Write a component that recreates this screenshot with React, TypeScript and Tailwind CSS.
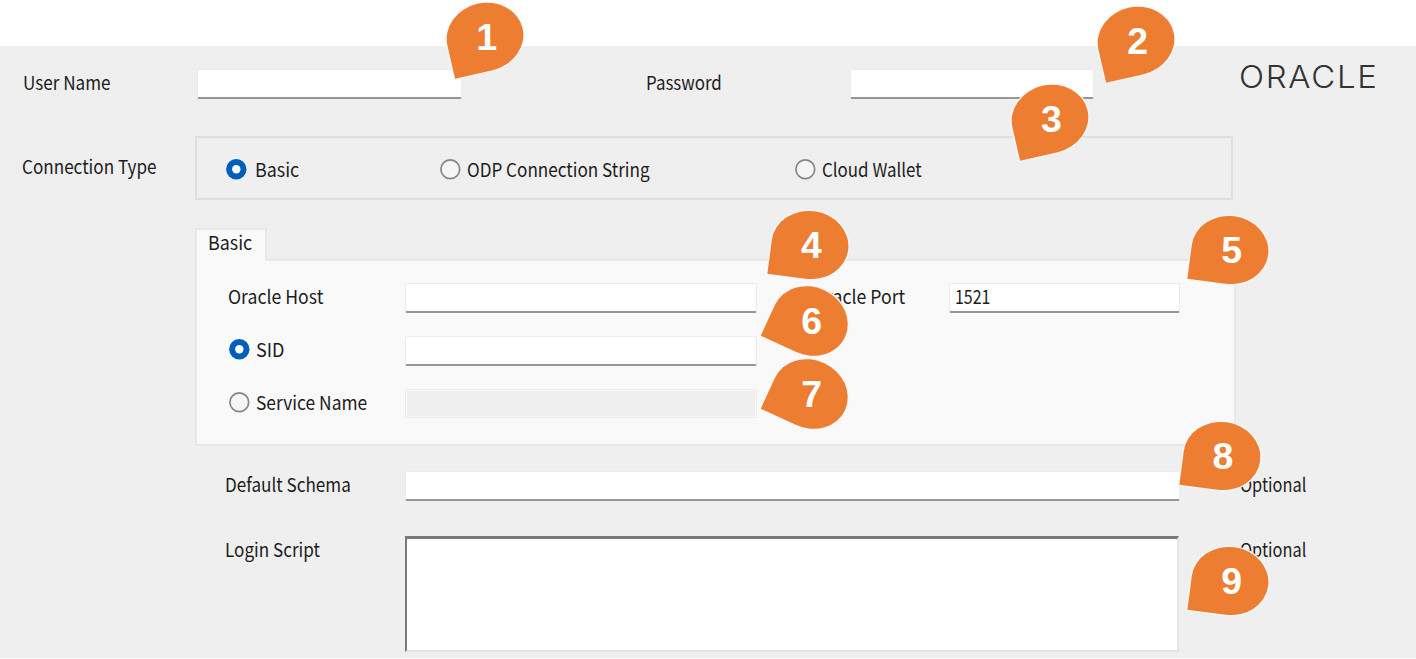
import type { ReactNode } from "react";

function Text({
  className = "",
  squeeze = "scale-x-[0.9]",
  children,
}: {
  className?: string;
  squeeze?: string;
  children: ReactNode;
}) {
  return (
    <span
      className={`block h-5 shrink-0 font-['Noto_Sans_CJK_JP','Noto_Sans',sans-serif] text-[19px] leading-5 whitespace-nowrap text-[#1c1c1c] ${className}`}
    >
      <span className={`inline-block origin-left ${squeeze}`}>{children}</span>
    </span>
  );
}

function Field({ className = "", children }: { className?: string; children?: ReactNode }) {
  return (
    <div
      className={`h-[30px] shrink-0 rounded-[2px] border border-b-2 border-[#ebebeb] border-b-[#969696] bg-white ${className}`}
    >
      {children}
    </div>
  );
}

function Radio({ checked = false, className = "" }: { checked?: boolean; className?: string }) {
  return (
    <svg className={`size-[22px] shrink-0 ${className}`} viewBox="0 0 22 22">
      {checked ? (
        <>
          <circle cx="11.3" cy="11.3" r="10.2" fill="#005fb8" />
          <circle cx="11.3" cy="11.3" r="4.2" fill="#fff" />
        </>
      ) : (
        <circle cx="11.3" cy="11.3" r="9.4" fill="#f5f5f5" stroke="#868686" strokeWidth="1.7" />
      )}
    </svg>
  );
}

const markers = [
  { n: 1, x: 485.3, y: 37.4, tilt: -13 },
  { n: 2, x: 1136.3, y: 41.2, tilt: -13 },
  { n: 3, x: 1050, y: 119, tilt: -13 },
  { n: 4, x: 810, y: 245, tilt: 7.5 },
  { n: 5, x: 1230.3, y: 249.5, tilt: 7.5 },
  { n: 6, x: 810.3, y: 320.5, tilt: 24.8 },
  { n: 7, x: 810.3, y: 393.5, tilt: 24.8 },
  { n: 8, x: 1221.5, y: 455.7, tilt: 7.5 },
  { n: 9, x: 1230.3, y: 580.7, tilt: 7.5 },
];

function Marker({ n, x, y, tilt }: { n: number; x: number; y: number; tilt: number }) {
  return (
    <div className="absolute size-[110px]" style={{ left: x - 55, top: y - 55 }}>
      <svg className="size-full" viewBox="-55 -55 110 110">
        <path
          d="M-38.5 0A38.5 34 0 0 1 38.5 0A38.5 34 0 0 1 0 34L-38.5 34Z"
          transform={`rotate(${tilt})`}
          fill="#ed7d31"
          stroke="#f6f6f6"
          strokeWidth="2.5"
          paintOrder="stroke"
        />
      </svg>
      <span className="absolute inset-0 pl-[3px] text-center font-['Liberation_Sans',sans-serif] text-[37.5px] leading-[110px] font-bold text-white">
        {n}
      </span>
    </div>
  );
}

export default function App() {
  return (
    <div className="relative flex h-[659px] w-[1416px] flex-col overflow-hidden bg-white">
      <div className="h-[46px] shrink-0" />
      <main className="flex h-[612px] flex-col bg-[#efefef]">
        <div className="flex h-[90px] items-start pt-[23px]">
          <Text className="mt-[3px] ml-[23px] w-[174px]">User Name</Text>
          <Field className="w-[265px]" />
          <Text className="mt-[3px] ml-[184px] w-[204px]" squeeze="scale-x-[0.89]">Password</Text>
          <Field className="w-[244px]" />
          <span className="-mt-[7px] ml-[145px] origin-left scale-x-[1.08] font-['Inter',sans-serif] text-[30.5px] leading-[30px] font-light tracking-[1.6px] text-[#333]">
            ORACLE
          </span>
        </div>

        <div className="flex h-[92px] items-start">
          <Text className="mt-5 ml-[22px] w-[173px]">Connection Type</Text>
          <div className="flex h-[64px] w-[1038px] items-start border-2 border-[#dfdfdf] pt-5">
            <Radio checked className="ml-7" />
            <Text className="mt-px ml-2 w-[184px]" squeeze="scale-x-[0.94]">Basic</Text>
            <Radio />
            <Text className="mt-px ml-[6px] w-[327px]">ODP Connection String</Text>
            <Radio />
            <Text className="mt-px ml-[6px]" squeeze="scale-x-[0.89]">Cloud Wallet</Text>
          </div>
        </div>

        <section className="ml-[195px] flex h-[218px] w-[1041px] flex-col">
          <div className="z-10 -mb-[2px] h-[33px] w-[72px] border-2 border-b-0 border-[#e8e8e8] bg-[#f9f9f9] pt-[2px] pl-[11px]">
            <Text squeeze="scale-x-[0.94]">Basic</Text>
          </div>
          <div className="flex h-[187px] flex-col border-2 border-[#e8e8e8] bg-[#f9f9f9] pt-[22px] pl-[31px]">
            <div className="flex h-[53px] items-start">
              <Text className="mt-[3px] w-[177px]" squeeze="scale-x-[0.93]">Oracle Host</Text>
              <Field className="w-[352px]" />
              <Text className="mt-[3px] ml-[56px] w-[136px]" squeeze="scale-x-[0.93]">Oracle Port</Text>
              <Field className="w-[231px] pt-[2px] pl-[5px]">
                <Text squeeze="scale-x-[0.84]">1521</Text>
              </Field>
            </div>
            <div className="flex h-[53px] items-start">
              <Radio checked className="mt-[2px]" />
              <Text className="mt-[3px] ml-[6px] w-[149px]" squeeze="scale-x-[0.95]">SID</Text>
              <Field className="w-[352px]" />
            </div>
            <div className="flex items-start">
              <Radio className="mt-[2px]" />
              <Text className="mt-[3px] ml-[6px] w-[149px]" squeeze="scale-x-[0.915]">Service Name</Text>
              <div className="h-[29px] w-[352px] rounded-[2px] border border-[#ebebeb] bg-[#f9f9f9] p-px">
                <div className="h-full bg-[#efefef]" />
              </div>
            </div>
          </div>
        </section>

        <div className="flex h-[65px] items-start pt-[25px]">
          <Text className="mt-[3px] ml-[225px] w-[180px]">Default Schema</Text>
          <Field className="w-[775px]" />
          <Text className="mt-[3px] ml-[60px]" squeeze="scale-x-[0.86]">Optional</Text>
        </div>
        <div className="flex items-start pt-[25px]">
          <Text className="mt-[3px] ml-[225px] w-[180px]">Login Script</Text>
          <div className="h-[116px] w-[774px] border-2 border-t-[3px] border-[#e5e5e5] border-t-[#7a7a7a] border-l-[#7a7a7a] bg-white" />
          <Text className="mt-[3px] ml-[61px]" squeeze="scale-x-[0.86]">Optional</Text>
        </div>
      </main>
      {markers.map((m) => (
        <Marker key={m.n} {...m} />
      ))}
    </div>
  );
}
